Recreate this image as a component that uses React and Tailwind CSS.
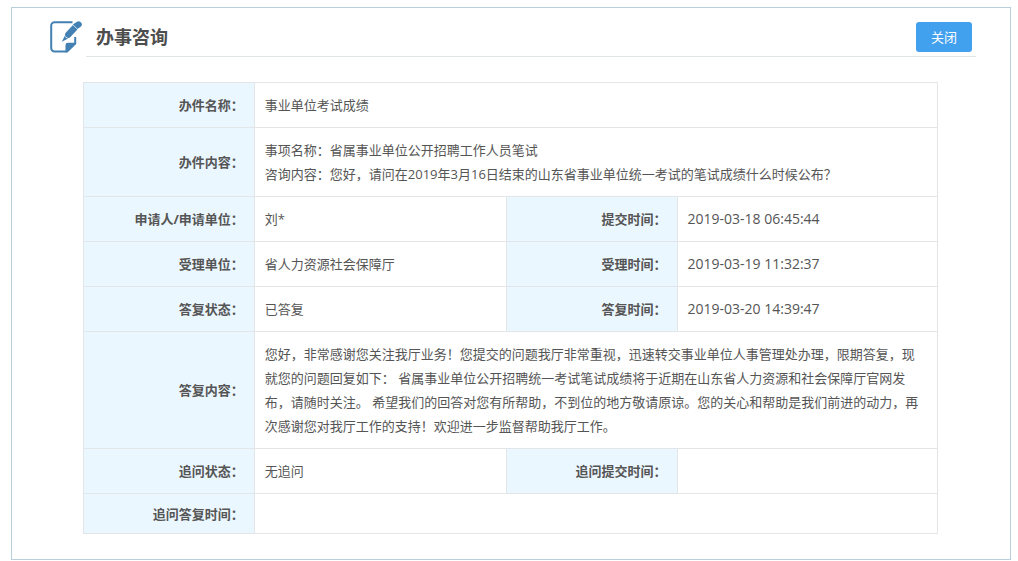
import React from 'react';

const NoteIcon = () => (
  <svg viewBox="0 0 32 32" className="w-8 h-8 shrink-0" aria-hidden="true">
    <path
      d="M22.500 1.200H4.500A3.300 3.300 0 0 0 1.200 4.500v22.600a3.300 3.300 0 0 0 3.300 3.300H16L25.200 22V16"
      fill="none"
      stroke="#4380b3"
      strokeWidth="2"
      strokeLinejoin="round"
    />
    <path d="M15.500 31.500v-7.500a2.300 2.300 0 0 1 2.300-2.300h8.400v1.300l-8.700 8.500z" fill="#4380b3" />
    <path d="M18.300 13.600 24.600 6.800" stroke="#4380b3" strokeWidth="6.400" strokeLinecap="round" />
    <path d="M26 5.200 28.700 3.400" stroke="#4380b3" strokeWidth="6.200" strokeLinecap="round" />
    <path d="M14.800 14.800 11.800 20.800 18.200 17.600q-2.800-.2-3.400-2.800z" fill="#4380b3" />
    <path d="m22.600 3.600 5.600 5.200" stroke="#fff" strokeWidth=".7" />
  </svg>
);

const Label = ({ children }) => (
  <th scope="row" className="border border-[#e3e6e8] bg-[#ebf7ff] px-2.5 text-right font-bold">
    {children}
  </th>
);

const Value = ({ children, span = 1, className = '' }) => (
  <td colSpan={span} className={`border border-[#e3e6e8] px-2.5 py-2.5 ${className}`}>
    {children}
  </td>
);

const rows = [
  { label: '申请人/申请单位：', value: '刘*', timeLabel: '提交时间：', time: '2019-03-18 06:45:44' },
  { label: '受理单位：', value: '省人力资源社会保障厅', timeLabel: '受理时间：', time: '2019-03-19 11:32:37' },
  { label: '答复状态：', value: '已答复', timeLabel: '答复时间：', time: '2019-03-20 14:39:47' },
];

const App = () => {
  return (
    <div
      lang="zh-CN"
      className="pt-[7px] pr-[7px] pl-[11px] text-[13px] leading-6 text-[#555] font-['Open_Sans','Noto_Sans_CJK_SC',sans-serif]"
    >
      <main className="border border-[#b9d0dc] pb-[25px]">
        <header className="mr-[34px] ml-[38px] flex items-end gap-1 pt-3">
          <div className="pb-1">
            <NoteIcon />
          </div>
          <div className="flex flex-1 items-center justify-between border-b border-[#e0e5e8] pt-0.5 pr-1 pb-1 pl-2.5">
            <h1 className="text-lg font-bold text-[#4d4d4d]">办事咨询</h1>
            <button type="button" className="h-[30px] w-14 rounded-[3px] bg-[#42a1ee] text-white">
              关闭
            </button>
          </div>
        </header>

        <div className="mt-[25px] mr-[72px] ml-[71px]">
          <table className="w-full table-fixed border-collapse">
            <colgroup>
              <col className="w-[20%]" />
              <col className="w-[29.5%]" />
              <col className="w-[20%]" />
              <col />
            </colgroup>
            <tbody>
              <tr>
                <Label>办件名称：</Label>
                <Value span={3}>事业单位考试成绩</Value>
              </tr>
              <tr>
                <Label>办件内容：</Label>
                <Value span={3}>
                  事项名称：省属事业单位公开招聘工作人员笔试
                  <br />
                  咨询内容：您好，请问在2019年3月16日结束的山东省事业单位统一考试的笔试成绩什么时候公布？
                </Value>
              </tr>
              {rows.map((row) => (
                <tr key={row.label}>
                  <Label>{row.label}</Label>
                  <Value>{row.value}</Value>
                  <Label>{row.timeLabel}</Label>
                  <Value className="text-sm leading-6">{row.time}</Value>
                </tr>
              ))}
              <tr>
                <Label>答复内容：</Label>
                <Value span={3}>
                  您好，非常感谢您关注我厅业务！您提交的问题我厅非常重视，迅速转交事业单位人事管理处办理，限期答复，现就您的问题回复如下： 省属事业单位公开招聘统一考试笔试成绩将于近期在山东省人力资源和社会保障厅官网发布，请随时关注。 希望我们的回答对您有所帮助，不到位的地方敬请原谅。您的关心和帮助是我们前进的动力，再次感谢您对我厅工作的支持！欢迎进一步监督帮助我厅工作。
                </Value>
              </tr>
              <tr>
                <Label>追问状态：</Label>
                <Value>无追问</Value>
                <Label>追问提交时间：</Label>
                <Value />
              </tr>
              <tr className="h-10">
                <Label>追问答复时间：</Label>
                <Value span={3} />
              </tr>
            </tbody>
          </table>
        </div>
      </main>
    </div>
  );
};

export default App;
